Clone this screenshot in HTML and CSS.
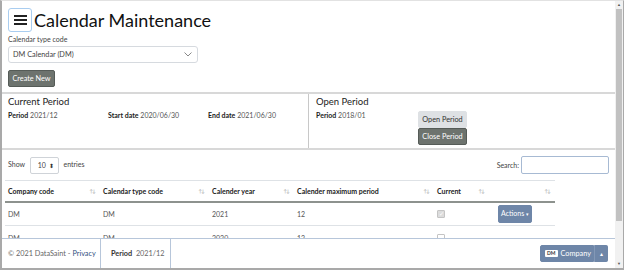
FILE: index.html
```html
<!DOCTYPE html>
<html lang="en">
<head>
<meta charset="UTF-8">
<title>Calendar Maintenance</title>
<link rel="stylesheet" href="styles.css">
</head>
<body>
<div class="window">
	<div class="viewport">
		<div class="page">
			<div class="title-row">
				<button class="menu-btn"><span></span><span></span><span></span></button>
				<h1>Calendar Maintenance</h1>
			</div>
			<label class="field-label">Calendar type code</label>
			<div class="select-box">
				<span>DM Calendar (DM)</span>
				<svg width="8" height="5" viewBox="0 0 8 5"><path d="M0.5 0.5 L4 4 L7.5 0.5" fill="none" stroke="#888" stroke-width="1"/></svg>
			</div>
			<button class="btn btn-dark create-btn">Create New</button>
		</div>

		<div class="periods">
			<div class="period-card current">
				<h2>Current Period</h2>
				<div class="period-line">
					<span class="item"><b>Period</b> 2021/12</span>
					<span class="item"><b>Start date</b> 2020/06/30</span>
					<span class="item"><b>End date</b> 2021/06/30</span>
				</div>
			</div>
			<div class="period-card open">
				<h2>Open Period</h2>
				<div class="open-body">
					<span class="item"><b>Period</b> 2018/01</span>
					<div class="btn-stack">
						<button class="btn btn-light">Open Period</button>
						<button class="btn btn-dark">Close Period</button>
					</div>
				</div>
			</div>
		</div>

		<div class="table-tools">
			<div class="length">Show <span class="len-select">10 <i>&#x2B0D;</i></span> entries</div>
			<div class="search">Search: <span class="search-input"></span></div>
		</div>

		<table class="grid">
			<thead>
				<tr>
					<th class="c1">Company code<i>&#x2191;&#x2193;</i></th>
					<th class="c2">Calendar type code<i>&#x2191;&#x2193;</i></th>
					<th class="c3">Calender year<i>&#x2191;&#x2193;</i></th>
					<th class="c4">Calender maximum period<i>&#x2191;&#x2193;</i></th>
					<th class="c5">Current<i>&#x2191;&#x2193;</i></th>
					<th class="c6"><i>&#x2191;&#x2193;</i></th>
				</tr>
			</thead>
			<tbody>
				<tr>
					<td>DM</td><td>DM</td><td>2021</td><td>12</td>
					<td><span class="check checked">&#x2713;</span></td>
					<td><button class="btn btn-blue">Actions <small>&#x25BE;</small></button></td>
				</tr>
				<tr>
					<td>DM</td><td>DM</td><td>2020</td><td>12</td>
					<td><span class="check"></span></td>
					<td></td>
				</tr>
			</tbody>
		</table>

		<footer class="footer">
			<div class="foot-cell copy">&copy; 2021 DataSaint - <a href="#">Privacy</a></div>
			<div class="foot-cell period"><b>Period</b>&nbsp; 2021/12</div>
			<div class="foot-spacer"></div>
			<div class="company-group">
				<button class="btn btn-blue company-btn"><span class="badge">DM</span> Company</button>
				<button class="btn btn-blue caret-btn">&#x25B4;</button>
			</div>
		</footer>
	</div>
	<div class="scrollbar">
		<div class="arrow">&#x25B2;</div>
		<div class="thumb"></div>
		<div class="track"></div>
		<div class="arrow">&#x25BC;</div>
	</div>
</div>
</body>
</html>
```

FILE: styles.css
```css
* {
	box-sizing: border-box;
}
body {
	margin: 0;
	font-family: Lato, "Open Sans", Arial, sans-serif;
	color: #333;
	background: #fff;
}
.window {
	width: 624px;
	height: 270px;
	display: flex;
	border-top: 1px solid #e2e2e2;
	border-left: 2px solid #a9a9a9;
	border-right: 1px solid #a9a9a9;
	border-bottom: 2px solid #a9a9a9;
	overflow: hidden;
}
.viewport {
	flex: 1;
	position: relative;
	overflow: hidden;
}
.page {
	padding: 7px 0 0 6px;
}
.title-row {
	display: flex;
	align-items: center;
	gap: 2px;
	height: 24px;
}
.menu-btn {
	width: 24px;
	height: 24px;
	border: 1px solid #a9cdf0;
	border-radius: 3px;
	background: #fff;
	display: flex;
	flex-direction: column;
	justify-content: center;
	align-items: center;
	gap: 2px;
	padding: 0;
}
.menu-btn span {
	display: block;
	width: 13px;
	height: 2px;
	background: #222;
}
h1 {
	margin: 0;
	font-size: 18px;
	font-weight: 400;
	color: #111;
	line-height: 24px;
}
.field-label {
	display: block;
	font-size: 7px;
	line-height: 11px;
	margin-top: 2px;
	color: #444;
}
.select-box {
	width: 190px;
	height: 17px;
	margin-top: 1px;
	border: 1px solid #d6dadf;
	border-radius: 3px;
	display: flex;
	align-items: center;
	justify-content: space-between;
	padding: 0 5px 0 4px;
	font-size: 7.3px;
	color: #444;
}
.btn {
	display: block;
	font-family: inherit;
	font-size: 7.3px;
	line-height: 1;
	border-radius: 2px;
	padding: 0 4px;
	height: 17px;
	white-space: nowrap;
	cursor: pointer;
}
.btn-dark {
	background: #6d736e;
	border: 1px solid #555b57;
	color: #fff;
}
.btn-light {
	background: #dee1e4;
	border: 1px solid #dee1e4;
	color: #333;
}
.btn-blue {
	background: #6e86a8;
	border: 1px solid #6e86a8;
	color: #fff;
}
.create-btn {
	margin-top: 7px;
	width: 47px;
	padding: 0;
}
.periods {
	display: flex;
	margin-top: 5px;
	border-top: 2px solid #d8d8d8;
	border-bottom: 2px solid #d8d8d8;
	height: 58px;
}
.period-card {
	padding: 1px 0 0 6px;
}
.period-card.current {
	width: 307px;
	border-right: 1px solid #c8c8c8;
}
.period-card.open {
	flex: 1;
	padding-left: 7px;
}
h2 {
	margin: 0;
	font-size: 9.5px;
	line-height: 13px;
	font-weight: 400;
	color: #222;
}
.period-line {
	display: flex;
	margin-top: 2px;
}
.period-line .item {
	width: 102px;
}
.item {
	font-size: 7px;
	line-height: 11px;
	color: #555;
}
.item b {
	color: #222;
}
.open-body {
	display: flex;
	margin-top: 2px;
}
.open-body .item {
	width: 102px;
}
.btn-stack {
	display: flex;
	flex-direction: column;
	align-items: flex-start;
	margin-top: 1px;
}
.btn-stack .btn {
	height: 17px;
	width: 49px;
	padding: 0;
}
.table-tools {
	display: flex;
	justify-content: space-between;
	align-items: center;
	padding: 6px 6px 0 6px;
	font-size: 7px;
	color: #444;
}
.len-select {
	display: inline-flex;
	align-items: center;
	justify-content: space-between;
	width: 29px;
	height: 17px;
	margin: 0 3px;
	padding: 0 4px 0 7px;
	border: 1px solid #cfd3d8;
	border-radius: 2px;
	vertical-align: middle;
}
.len-select i {
	font-style: normal;
	font-size: 6px;
	color: #333;
}
.search {
	display: flex;
	align-items: center;
	gap: 2px;
}
.search-input {
	width: 88px;
	height: 18px;
	border: 1px solid #a7bad3;
	border-radius: 2px;
}
.grid {
	margin: 6px 0 0 3px;
	width: 550px;
	table-layout: fixed;
	border-collapse: collapse;
	font-size: 7px;
}
.grid th {
	text-align: left;
	font-weight: 700;
	color: #222;
	height: 21px;
	padding: 0 6px 0 3px;
	border-top: 1px solid #dee2e6;
	border-bottom: 2px solid #8d928e;
	position: relative;
}
.grid th i {
	position: absolute;
	right: 5px;
	top: 7px;
	font-style: normal;
	font-size: 5px;
	color: #bbb;
	letter-spacing: -1px;
}
.c1 { width: 95px; }
.c2 { width: 109px; }
.c3 { width: 85px; }
.c4 { width: 140px; }
.c5 { width: 55px; }
.c6 { width: 66px; }
.grid td {
	height: 24px;
	padding: 0 3px;
	color: #555;
	border-bottom: 1px solid #dee2e6;
}
.check {
	display: block;
	width: 8px;
	height: 8px;
	border: 1px solid #c4c4c4;
	border-radius: 1px;
	background: #fff;
	font-size: 6px;
	line-height: 6px;
	text-align: center;
	color: #999;
}
.check.checked {
	background: #dcdcdc;
	color: #fff;
}
.grid td .btn-blue {
	height: 18px;
	width: 34px;
	padding: 0;
	margin-left: 6px;
	font-size: 7px;
}
.grid td .btn-blue small {
	font-size: 5px;
}
.footer {
	position: absolute;
	left: 0;
	right: 0;
	bottom: 0;
	height: 30px;
	background: #fff;
	border-top: 1px solid #b7c6da;
	display: flex;
	align-items: stretch;
	font-size: 7.3px;
	color: #666;
}
.foot-cell {
	display: flex;
	align-items: center;
	white-space: nowrap;
	border-right: 1px solid #b7c6da;
}
.foot-cell.copy {
	width: 99px;
	padding-left: 6px;
}
.foot-cell.copy a {
	color: #2f4f7f;
	text-decoration: none;
	margin-left: 2px;
}
.foot-cell.period {
	width: 70px;
	padding-left: 10px;
}
.foot-cell.period b {
	color: #333;
}
.foot-spacer {
	flex: 1;
}
.company-group {
	display: flex;
	align-items: center;
	margin-right: 7px;
}
.company-btn {
	height: 17px;
	width: 54px;
	border-radius: 2px 0 0 2px;
	display: flex;
	align-items: center;
	gap: 3px;
	padding: 0 4px;
}
.badge {
	background: #fff;
	color: #333;
	font-size: 5px;
	font-weight: 700;
	padding: 1px 2px;
	border-radius: 1px;
}
.caret-btn {
	height: 17px;
	width: 14px;
	padding: 0;
	border-left: 1px solid #8398b6;
	border-radius: 0 2px 2px 0;
	font-size: 6px;
}
.scrollbar {
	width: 8px;
	display: flex;
	flex-direction: column;
	background: #f1f1f1;
}
.arrow {
	height: 8px;
	font-size: 4px;
	line-height: 8px;
	text-align: center;
	color: #555;
}
.thumb {
	height: 212px;
	background: #c1c1c1;
	margin: 0 1px;
}
.track {
	flex: 1;
}
```
